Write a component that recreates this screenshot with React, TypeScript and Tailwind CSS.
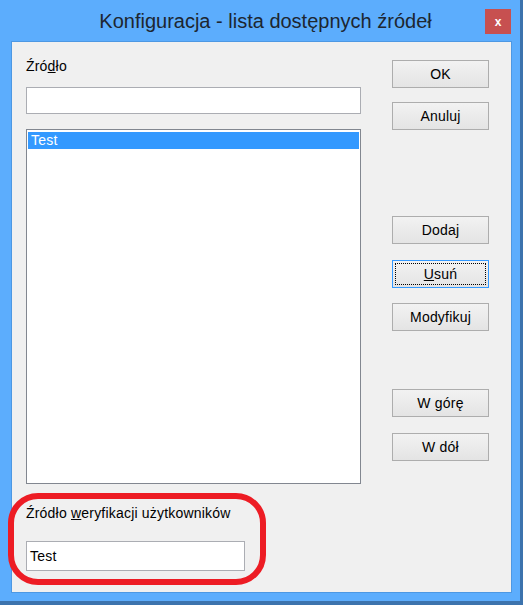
import React from 'react';

const font = "font-['Liberation_Sans',Arial,sans-serif]";

type Btn = { label: React.ReactNode; mt: string; focused?: boolean };

const buttons: Btn[] = [
  { label: 'OK', mt: 'mt-0' },
  { label: 'Anuluj', mt: 'mt-[14px]' },
  { label: <>Doda<span className="underline">j</span></>, mt: 'mt-[86px]' },
  { label: <><span className="underline">U</span>suń</>, mt: 'mt-[16px]', focused: true },
  { label: 'Modyfikuj', mt: 'mt-[15px]' },
  { label: 'W górę', mt: 'mt-[58px]' },
  { label: 'W dół', mt: 'mt-[16px]' },
];

const DialogButton: React.FC<Btn> = ({ label, mt, focused }) => (
  <button
    type="button"
    className={`${mt} relative h-[28px] w-[97px] border bg-gradient-to-b from-[#f2f2f2] to-[#e4e4e4] text-[14px] tracking-[0.2px] text-black ${
      focused ? 'border-[#3399ff]' : 'border-[#adadad]'
    }`}
  >
    {focused && (
      <span className="pointer-events-none absolute inset-[2px] border border-dotted border-black" />
    )}
    <span className="relative">{label}</span>
  </button>
);

export default function App() {
  return (
    <div className={`relative h-[605px] w-[523px] overflow-hidden bg-[#3c73ad] ${font}`}>
      <div className="flex h-[601px] w-[520px] flex-col bg-[#5cadfd] pl-[11px] pt-px">
        {/* Title bar */}
        <div className="relative flex h-[40px] w-[509px] items-center justify-center">
          <span className="text-[20px] text-[#1d2630]">Konfiguracja - lista dostępnych źródeł</span>
          <div className="absolute right-[9px] top-[8px] flex h-[25px] w-[26px] items-center justify-center bg-[#c75050] text-[12px] font-bold leading-none text-white">
            x
          </div>
        </div>

        {/* Client area */}
        <div className="flex h-[552px] w-[501px] border border-[#4d98e3] bg-[#f0f0f0] text-[14px] tracking-[0.2px] text-black">
          <div className="flex w-[350px] flex-col pl-[14px] pt-[17px]">
            <div className="h-[15px] leading-[15px]">
              Źró<span className="underline">d</span>ło
            </div>
            <div className="mt-[13px] h-[27px] w-[335px] border border-[#abadb3] bg-white" />
            <div className="mt-[15px] h-[355px] w-[335px] border border-[#828790] bg-white p-px pt-[2px]">
              <div className="h-[17px] bg-[#3399ff] pl-[3px] leading-[17px] text-white">Test</div>
            </div>
            <div className="mt-[22px] h-[15px] leading-[15px]">
              Źródło <span className="underline">w</span>eryfikacji użytkowników
            </div>
            <div className="mt-[20px] flex h-[30px] w-[219px] items-center border border-[#abadb3] bg-white pl-[3px]">
              Test
            </div>
          </div>
          <div className="ml-[30px] flex flex-col pt-[18px]">
            {buttons.map((b, i) => (
              <DialogButton key={i} {...b} />
            ))}
          </div>
        </div>
      </div>

      {/* Annotation */}
      <div className="pointer-events-none absolute left-[8px] top-[493px] h-[92px] w-[258px] rounded-[30px] border-[6px] border-[#ed1c24]" />
    </div>
  );
}
